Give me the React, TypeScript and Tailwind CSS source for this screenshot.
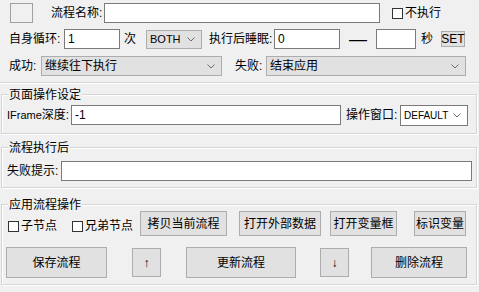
import React from 'react';

const inputCls =
  'h-[20px] border border-[#7a7a7a] bg-white px-[3px] text-[12px] leading-[18px] outline-none';
const btnCls =
  'flex items-center justify-center border border-[#adadad] bg-[#e1e1e1] text-[12px] leading-none';

function Chevron() {
  return (
    <svg width="8" height="5" viewBox="0 0 8 5" className="shrink-0">
      <path d="M0.5 0.5 L4 4 L7.5 0.5" fill="none" stroke="#6d6d6d" strokeWidth="1" />
    </svg>
  );
}

function Select({
  value,
  className,
}: {
  value: string;
  className: string;
}) {
  return (
    <div className={`flex items-center justify-between pl-[3px] pr-[6px] ${className}`}>
      <span className="whitespace-nowrap">{value}</span>
      <Chevron />
    </div>
  );
}

function Check({ label, className = '' }: { label: string; className?: string }) {
  return (
    <div className={`flex items-center ${className}`}>
      <span className="h-[11px] w-[11px] border border-[#333] bg-white" />
      <span className="ml-[2px] text-[12px] leading-none">{label}</span>
    </div>
  );
}

function Group({
  title,
  className = '',
  children,
}: {
  title: string;
  className?: string;
  children: React.ReactNode;
}) {
  return (
    <div
      className={`ml-px w-[476px] border border-[#d5d5d5] shadow-[1px_1px_0_#fff,inset_1px_1px_0_#fff] ${className}`}
    >
      <div className="-mt-[6px] ml-[6px] w-fit bg-[#f0f0f0] px-[1px] text-[12px] leading-[12px]">
        {title}
      </div>
      {children}
    </div>
  );
}

export default function App() {
  return (
    <div className="h-[292px] w-[479px] overflow-hidden bg-[#f0f0f0] pt-[3px] font-['Liberation_Sans','Noto_Sans_CJK_SC',sans-serif] text-[12px] text-black">
      {/* 第一行 */}
      <div className="flex h-[20px] items-center">
        <div className="ml-[10px] h-[20px] w-[23px] border border-[#a0a0a0]" />
        <span className="ml-[18px] w-[53px] whitespace-nowrap">流程名称:</span>
        <input readOnly value="" className={`${inputCls} w-[276px]`} />
        <Check label="不执行" className="ml-[12px]" />
      </div>

      {/* 第二行 */}
      <div className="mt-[6px] flex h-[20px] items-center">
        <span className="ml-[9px] w-[55px] whitespace-nowrap">自身循环:</span>
        <input readOnly value="1" className={`${inputCls} w-[56px]`} />
        <span className="ml-[4px] w-[12px]">次</span>
        <Select
          value="BOTH"
          className="ml-[10px] h-[19px] w-[56px] border border-[#adadad] bg-[#e1e1e1] text-[11px]"
        />
        <span className="ml-[7px] w-[65px] whitespace-nowrap">执行后睡眠:</span>
        <input readOnly value="0" className={`${inputCls} w-[66px]`} />
        <span className="flex w-[36px] justify-center text-[18px] leading-none">—</span>
        <input readOnly value="" className={`${inputCls} w-[40px]`} />
        <span className="ml-[5px] w-[12px]">秒</span>
        <div className={`${btnCls} ml-[8px] h-[16px] w-[24px] text-[10px]`}>SET</div>
      </div>

      {/* 第三行 */}
      <div className="mt-[7px] flex h-[20px] items-center">
        <span className="ml-[9px] w-[32px] whitespace-nowrap">成功:</span>
        <Select
          value="继续往下执行"
          className="h-[20px] w-[181px] border border-[#adadad] bg-[#e1e1e1]"
        />
        <span className="ml-[13px] w-[31px] whitespace-nowrap">失败:</span>
        <Select
          value="结束应用"
          className="h-[20px] w-[200px] border border-[#adadad] bg-[#e1e1e1]"
        />
      </div>

      <div className="mt-[6px] h-[2px] border-t border-[#d5d5d5] bg-white" />

      <Group title="页面操作设定" className="mt-[10px] pb-[8px]">
        <div className="mt-[4px] flex h-[20px] items-center pl-[5px]">
          <span className="w-[64px] whitespace-nowrap">
            <span className="text-[11px]">IFrame</span>深度:
          </span>
          <input readOnly value="-1" className={`${inputCls} w-[270px]`} />
          <span className="ml-[5px] w-[54px] whitespace-nowrap">操作窗口:</span>
          <Select
            value="DEFAULT"
            className="h-[21px] w-[68px] border border-[#7a7a7a] bg-white pl-[1px] pr-[5px] text-[10px]"
          />
        </div>
      </Group>

      <Group title="流程执行后" className="mt-[13px] pb-[6px]">
        <div className="mt-[7px] flex h-[20px] items-center pl-[5px]">
          <span className="w-[54px] whitespace-nowrap">失败提示:</span>
          <input readOnly value="" className={`${inputCls} w-[411px]`} />
        </div>
      </Group>

      <Group title="应用流程操作" className="mt-[16px] pb-[6px]">
        <div className="flex h-[25px] items-center">
          <Check label="子节点" className="ml-[6px] mt-[5px]" />
          <Check label="兄弟节点" className="ml-[15px] mt-[5px]" />
          <div className={`${btnCls} ml-[7px] h-[25px] w-[87px]`}>拷贝当前流程</div>
          <div className={`${btnCls} ml-[12px] h-[25px] w-[82px]`}>打开外部数据</div>
          <div className={`${btnCls} ml-[9px] h-[25px] w-[67px]`}>打开变量框</div>
          <div className={`${btnCls} ml-[17px] h-[25px] w-[52px]`}>标识变量</div>
        </div>
        <div className="mt-[11px] flex h-[31px] items-center">
          <div className={`${btnCls} ml-[4px] h-[31px] w-[101px]`}>保存流程</div>
          <div className={`${btnCls} ml-[25px] h-[29px] w-[29px] text-[10px]`}>↑</div>
          <div className={`${btnCls} ml-[25px] h-[31px] w-[110px]`}>更新流程</div>
          <div className={`${btnCls} ml-[24px] h-[29px] w-[29px] text-[10px]`}>↓</div>
          <div className={`${btnCls} ml-[22px] h-[31px] w-[96px]`}>删除流程</div>
        </div>
      </Group>
    </div>
  );
}
